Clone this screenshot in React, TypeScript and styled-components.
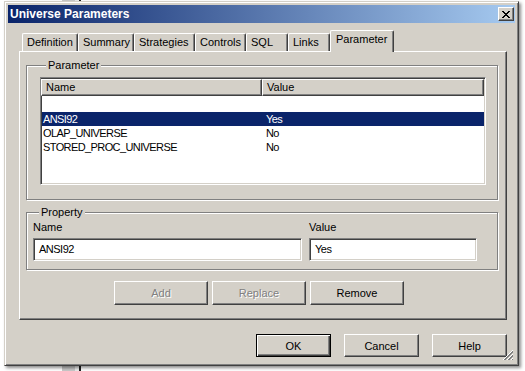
import React from "react";
import styled, { createGlobalStyle, css } from "styled-components";

const GlobalStyle = createGlobalStyle`
  html, body { margin: 0; padding: 0; background: #ffffff; }
  body {
    font-family: "Liberation Sans", Arial, sans-serif;
    font-size: 11px;
    color: #000;
  }
  * { box-sizing: border-box; }
`;

const raised = css`
  border: 1px solid;
  border-color: #ffffff #404040 #404040 #ffffff;
  box-shadow: inset -1px -1px #808080, inset 1px 1px #d4d0c8;
`;

const sunken = css`
  border: 1px solid;
  border-color: #808080 #ffffff #ffffff #808080;
  box-shadow: inset 1px 1px #404040, inset -1px -1px #d4d0c8;
`;

const Desktop = styled.div`
  position: relative;
  width: 525px;
  height: 371px;
  overflow: hidden;
  padding: 1px 0 0 4px;
`;

/* a window lying behind the dialog on the desktop, only its edge shows */
const BackWindow = styled.div`
  position: absolute;
  left: 62px;
  top: 0;
  width: 19px;
  height: 371px;
  background: #c8c8c8;
  border-right: 2px solid #202020;
  box-shadow: inset -4px 0 #ececec;
`;

const Window = styled.div`
  position: relative;
  z-index: 1;
  width: 515px;
  height: 365px;
  background: #d4d0c8;
  border: 1px solid;
  border-color: #d4d0c8 #404040 #404040 #d4d0c8;
  box-shadow: inset 1px 1px #ffffff, inset -1px -1px #808080,
    2px 2px 3px rgba(0, 0, 0, 0.45);
  padding: 3px;
  display: flex;
  flex-direction: column;
`;

const TitleBar = styled.div`
  height: 18px;
  display: flex;
  align-items: center;
  padding-left: 2px;
  background: linear-gradient(to right, #0a246a, #a6caf0);
  color: #fff;
  font-weight: bold;
  font-size: 12px;
`;

const CloseButton = styled.div`
  ${raised};
  margin-left: auto;
  margin-right: 1px;
  width: 16px;
  height: 14px;
  background: #d4d0c8;
  display: flex;
  align-items: center;
  justify-content: center;
`;

const Content = styled.div`
  display: flex;
  flex-direction: column;
  padding: 7px 8px 0 11px;
`;

const TabStrip = styled.div`
  display: flex;
  align-items: flex-end;
  height: 21px;
  padding-left: 3px;
`;

const Tab = styled.div<{ $w: number; $active?: boolean }>`
  width: ${(p) => p.$w}px;
  height: ${(p) => (p.$active ? 22 : 18)}px;
  margin-bottom: ${(p) => (p.$active ? -1 : 0)}px;
  position: relative;
  z-index: ${(p) => (p.$active ? 2 : 0)};
  background: #d4d0c8;
  border-top: 1px solid #ffffff;
  border-left: 1px solid #ffffff;
  border-right: 1px solid #404040;
  box-shadow: inset -1px 0 #808080;
  border-radius: 2px 2px 0 0;
  padding: ${(p) => (p.$active ? "2px 0 0 5px" : "2px 0 0 4px")};
  line-height: 13px;
  white-space: nowrap;
`;

const Panel = styled.div`
  height: 269px;
  background: #d4d0c8;
  border: 1px solid;
  border-color: #ffffff #404040 #404040 #ffffff;
  box-shadow: inset -1px -1px #808080;
  padding: 7px 8px 0 6px;
  display: flex;
  flex-direction: column;
`;

const Group = styled.fieldset<{ $pad: string; $mt?: number }>`
  margin: ${(p) => p.$mt ?? 0}px 0 0 0;
  padding: ${(p) => p.$pad};
  border: 1px solid #808080;
  box-shadow: inset 1px 1px #ffffff, 1px 1px #ffffff;
  min-width: 0;
`;

const Legend = styled.legend`
  margin-left: 6px;
  padding: 0 2px;
  line-height: 13px;
  background: #d4d0c8;
`;

const ListBox = styled.div`
  ${sunken};
  height: 108px;
  background: #fff;
  padding: 2px 1px;
  display: flex;
  flex-direction: column;
`;

const HeaderRow = styled.div`
  display: grid;
  grid-template-columns: 221px 1fr;
  height: 17px;
  margin-left: -1px;
  margin-top: -1px;
`;

const HeaderCell = styled.div`
  ${raised};
  background: #d4d0c8;
  padding-left: 4px;
  line-height: 14px;
`;

const ListBody = styled.div`
  padding-top: 16px;
  display: flex;
  flex-direction: column;
`;

const Row = styled.div<{ $selected?: boolean }>`
  display: grid;
  grid-template-columns: 223px 1fr;
  height: 14px;
  line-height: 14px;
  padding-left: 1px;
  letter-spacing: -0.6px;
  background: ${(p) => (p.$selected ? "#0a246a" : "transparent")};
  color: ${(p) => (p.$selected ? "#ffffff" : "#000")};
`;

const Fields = styled.div`
  display: grid;
  grid-template-columns: 269px 168px;
  column-gap: 7px;
  row-gap: 4px;
`;

const FieldLabel = styled.div`
  line-height: 13px;
`;

const TextBox = styled.div`
  ${sunken};
  height: 23px;
  background: #fff;
  padding-left: 5px;
  line-height: 21px;
  letter-spacing: -0.5px;
`;

const ActionRow = styled.div`
  display: flex;
  gap: 4px;
  margin-top: 11px;
  padding-left: 88px;
`;

const Button = styled.div<{ $w: number; $disabled?: boolean; $default?: boolean }>`
  width: ${(p) => p.$w}px;
  height: ${(p) => (p.$w === 75 ? 23 : 24)}px;
  background: #d4d0c8;
  display: flex;
  align-items: center;
  justify-content: center;
  ${(p) =>
    p.$default
      ? css`
          border: 1px solid #000;
          box-shadow: inset 1px 1px #ffffff, inset -1px -1px #404040,
            inset -2px -2px #808080;
        `
      : raised};
  color: ${(p) => (p.$disabled ? "#808080" : "#000")};
  text-shadow: ${(p) => (p.$disabled ? "1px 1px 0 #ffffff" : "none")};
`;

const Footer = styled.div`
  display: flex;
  justify-content: flex-end;
  gap: 13px;
  margin-top: 14px;
`;

const Grip = styled.svg`
  position: absolute;
  right: 4px;
  bottom: 4px;
`;

const rows = [
  { name: "ANSI92", value: "Yes", selected: true },
  { name: "OLAP_UNIVERSE", value: "No" },
  { name: "STORED_PROC_UNIVERSE", value: "No" },
];

const tabs = [
  { label: "Definition", w: 56 },
  { label: "Summary", w: 56 },
  { label: "Strategies", w: 61 },
  { label: "Controls", w: 51 },
  { label: "SQL", w: 42 },
  { label: "Links", w: 42 },
  { label: "Parameter", w: 64, active: true },
];

export default function App() {
  return (
    <>
      <GlobalStyle />
      <Desktop>
        <BackWindow />
        <Window>
          <TitleBar>
            Universe Parameters
            <CloseButton>
              <svg width="8" height="7" viewBox="0 0 8 7" shapeRendering="crispEdges">
                <path
                  d="M0 0h2v1h-2zM6 0h2v1h-2zM1 1h2v1h-2zM5 1h2v1h-2zM2 2h4v1h-4zM3 3h2v1h-2zM2 4h4v1h-4zM1 5h2v1h-2zM5 5h2v1h-2zM0 6h2v1h-2zM6 6h2v1h-2z"
                  fill="#000"
                />
              </svg>
            </CloseButton>
          </TitleBar>
          <Content>
            <TabStrip>
              {tabs.map((t) => (
                <Tab key={t.label} $w={t.w} $active={t.active}>
                  {t.label}
                </Tab>
              ))}
            </TabStrip>
            <Panel>
              <Group $pad="5px 11px 14px 13px">
                <Legend>Parameter</Legend>
                <ListBox>
                  <HeaderRow>
                    <HeaderCell>Name</HeaderCell>
                    <HeaderCell>Value</HeaderCell>
                  </HeaderRow>
                  <ListBody>
                    {rows.map((r) => (
                      <Row key={r.name} $selected={r.selected}>
                        <span>{r.name}</span>
                        <span>{r.value}</span>
                      </Row>
                    ))}
                  </ListBody>
                </ListBox>
              </Group>
              <Group $pad="2px 20px 8px 6px" $mt={6}>
                <Legend>Property</Legend>
                <Fields>
                  <FieldLabel>Name</FieldLabel>
                  <FieldLabel>Value</FieldLabel>
                  <TextBox>ANSI92</TextBox>
                  <TextBox>Yes</TextBox>
                </Fields>
              </Group>
              <ActionRow>
                <Button $w={94} $disabled>Add</Button>
                <Button $w={94} $disabled>Replace</Button>
                <Button $w={94}>Remove</Button>
              </ActionRow>
            </Panel>
            <Footer>
              <Button $w={75} $default>OK</Button>
              <Button $w={75}>Cancel</Button>
              <Button $w={75}>Help</Button>
            </Footer>
          </Content>
          <Grip width="12" height="12" viewBox="0 0 12 12" shapeRendering="crispEdges">
            <path d="M11 1L1 11M11 5L5 11M11 9L9 11" stroke="#ffffff" strokeWidth="1" />
            <path d="M11 2L2 11M11 3L3 11M11 6L6 11M11 7L7 11M11 10L10 11" stroke="#808080" strokeWidth="1" />
          </Grip>
        </Window>
      </Desktop>
    </>
  );
}
